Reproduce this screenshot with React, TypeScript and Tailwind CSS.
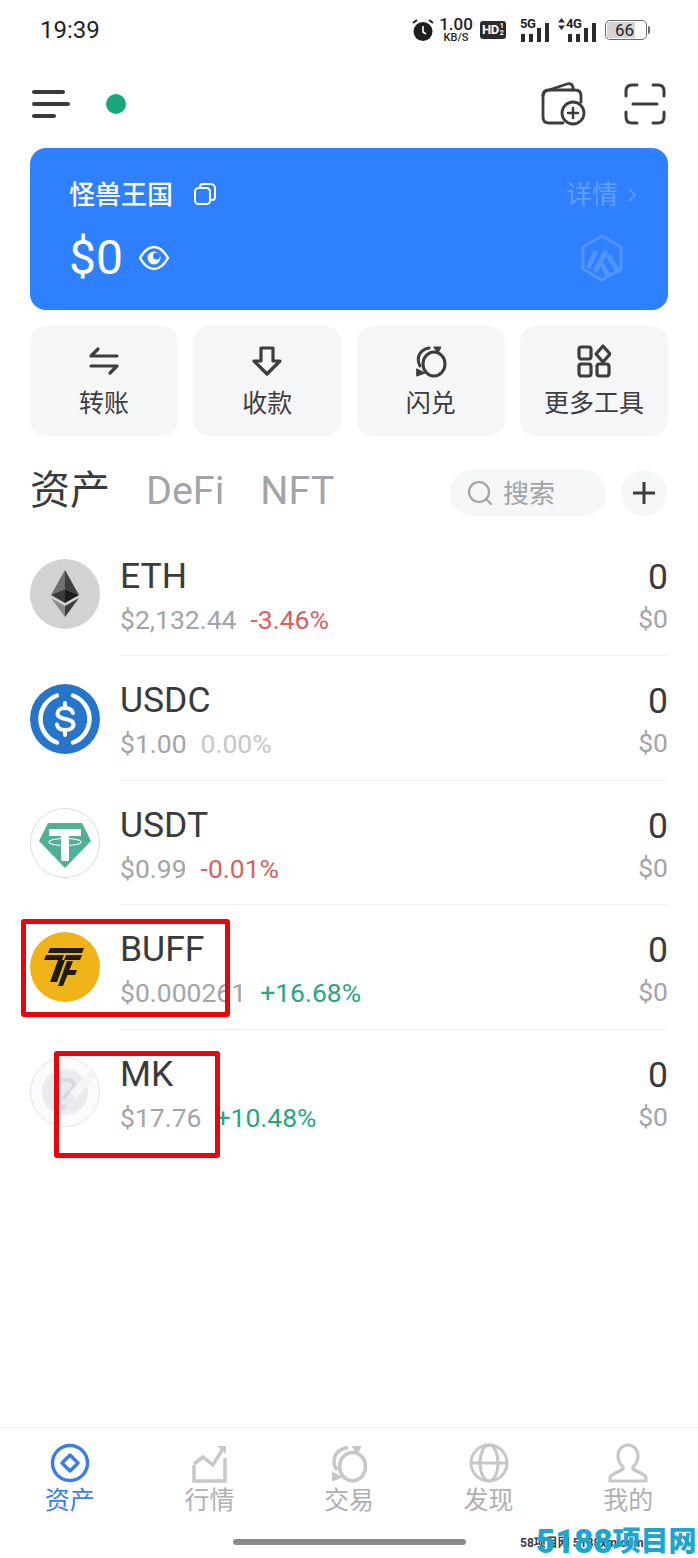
import type { ReactNode } from 'react';

/* ── Token data ── */
type Token = {
  symbol: string;
  price: string;
  change: string;
  tone: 'red' | 'green' | 'flat';
  logo: ReactNode;
};

function EthLogo() {
  return (
    <svg viewBox="0 0 70 70" className="w-[70px] h-[70px]">
      <circle cx="35" cy="35" r="35" fill="#d2d2d2" />
      <polygon points="35,11 21,36 35,30" fill="#6f6f6f" />
      <polygon points="35,11 49,36 35,30" fill="#3f3f3f" />
      <polygon points="21,36 35,30 35,44" fill="#3a3a3a" />
      <polygon points="49,36 35,30 35,44" fill="#1c1c1c" />
      <polygon points="21,39 35,47 35,58" fill="#8a8a8a" />
      <polygon points="49,39 35,47 35,58" fill="#3f3f3f" />
    </svg>
  );
}

function UsdcLogo() {
  return (
    <svg viewBox="0 0 70 70" className="w-[70px] h-[70px]">
      <circle cx="35" cy="35" r="35" fill="#2775ca" />
      <path d="M27 11.500a25 25 0 0 0 0 47" fill="none" stroke="#fff" strokeWidth="4.500" strokeLinecap="round" />
      <path d="M43 11.500a25 25 0 0 1 0 47" fill="none" stroke="#fff" strokeWidth="4.500" strokeLinecap="round" />
      <path
        d="M43 29c-1-3-4-5-8-5-4.500 0-7.500 2.500-7.500 5.500 0 7.500 16 3.500 16 11 0 3.500-3.500 5.500-8.500 5.500-4.500 0-7.500-2-8-5.500"
        fill="none"
        stroke="#fff"
        strokeWidth="4"
        strokeLinecap="round"
      />
      <path d="M35 19v5M35 46v5" stroke="#fff" strokeWidth="4" strokeLinecap="round" />
    </svg>
  );
}

function UsdtLogo() {
  return (
    <svg viewBox="0 0 70 70" className="w-[70px] h-[70px]">
      <circle cx="35" cy="35" r="34.500" fill="#fff" stroke="#dcdcdc" />
      <polygon points="18,15 52,15 61,33 35,60 9,33" fill="#50af95" />
      <path d="M19 21h32v7H39v25h-8V28H19z" fill="#fff" />
      <ellipse cx="35" cy="34" rx="16" ry="3.500" fill="none" stroke="#fff" strokeWidth="1.200" />
    </svg>
  );
}

function BuffLogo() {
  return (
    <svg viewBox="0 0 70 70" className="w-[70px] h-[70px]">
      <circle cx="35" cy="35" r="35" fill="#efb318" />
      <polygon points="20,16 54,16 52,21 18,21" fill="#1f1a12" />
      <polygon points="16,23 34,23 32,28 14,28" fill="#1f1a12" />
      <polygon points="36,23 52,23 50,28 34,28" fill="#1f1a12" />
      <polygon points="28,28 35,28 27,50 20,50" fill="#1f1a12" />
      <polygon points="37,29 43,29 33,54 28,54" fill="#1f1a12" />
      <polygon points="37,38 47,38 45,43 35,43" fill="#1f1a12" />
    </svg>
  );
}

function UnknownLogo() {
  return (
    <svg viewBox="0 0 70 70" className="w-[70px] h-[70px]">
      <circle cx="35" cy="35" r="34.500" fill="#fbfbfc" stroke="#e2e3e6" />
      <circle cx="35" cy="35" r="23" fill="#e9ebf0" />
      <path d="M29 27c2-6 14-6 15 1 1 6-9 7-11 15" fill="none" stroke="#d8dae0" strokeWidth="4" />
      <circle cx="33" cy="50" r="3" fill="#d8dae0" />
      <polygon points="40,35 60,13 64,20 46,42" fill="#f4f5f7" />
    </svg>
  );
}

const TOKENS: Token[] = [
  { symbol: 'ETH', price: '$2,132.44', change: '-3.46%', tone: 'red', logo: <EthLogo /> },
  { symbol: 'USDC', price: '$1.00', change: '0.00%', tone: 'flat', logo: <UsdcLogo /> },
  { symbol: 'USDT', price: '$0.99', change: '-0.01%', tone: 'red', logo: <UsdtLogo /> },
  { symbol: 'BUFF', price: '$0.000261', change: '+16.68%', tone: 'green', logo: <BuffLogo /> },
  { symbol: 'MK', price: '$17.76', change: '+10.48%', tone: 'green', logo: <UnknownLogo /> },
];

/* ── Status bar ── */
function Signal({ bars }: { bars: number[] }) {
  return (
    <div className="flex items-end gap-[4px]">
      {bars.map((h, i) => (
        <div key={i} className="w-[4px] bg-[#2b2b2d]" style={{ height: h }} />
      ))}
    </div>
  );
}

function StatusBar() {
  return (
    <div className="h-[60px] pl-[40px] pr-[48px] flex items-center justify-between text-[#1f1f21]">
      <span className="text-[24px] leading-none">19:39</span>
      <div className="flex items-center">
        <svg viewBox="0 0 22 24" className="w-[22px] h-[24px]">
          <circle cx="11" cy="13.500" r="9.500" fill="#1f1f21" />
          <path d="M11 8v6l3 2" fill="none" stroke="#fff" strokeWidth="1.600" />
          <path d="M1 5l4-3M21 5l-4-3" stroke="#1f1f21" strokeWidth="2" />
        </svg>
        <div className="ml-[6px] w-[32px] flex flex-col items-center font-medium">
          <span className="text-[17px] leading-[15px]">1.00</span>
          <span className="text-[11px] leading-[11px]">KB/S</span>
        </div>
        <div className="ml-[8px] w-[26px] h-[18px] rounded-[3px] bg-[#2b2b2d] text-white font-bold pl-[2px] flex items-center">
          <span className="text-[13px] leading-[18px] tracking-[-0.5px]">HD</span>
          <span className="ml-[1px] flex flex-col text-[7px] leading-[7px]">
            <span>1</span>
            <span>2</span>
          </span>
        </div>
        <div className="ml-[13px] relative w-[30px] h-[24px] flex items-end justify-end">
          <span className="absolute left-[1px] -top-[1px] text-[13px] leading-[14px] font-bold tracking-[-0.5px]">5G</span>
          <Signal bars={[8, 8, 14, 19]} />
        </div>
        <div className="ml-[7px] relative w-[40px] h-[24px] flex items-end justify-end">
          <svg viewBox="0 0 7 12" className="absolute left-[2px] top-[0px] w-[7px] h-[12px]" fill="#2b2b2d">
            <path d="M3.500 0L7 4.500H0zM3.500 12L0 7.500h7z" />
          </svg>
          <span className="absolute left-[10px] -top-[1px] text-[13px] leading-[14px] font-bold tracking-[-0.5px]">4G</span>
          <Signal bars={[8, 8, 14, 19]} />
        </div>
        <div className="ml-[9px] w-[42px] h-[20px] rounded-[5px] border border-[#6a6a6c] p-[1px] flex">
          <div className="w-[28px] bg-[#d4d4d6] rounded-l-[3px] text-[17px] leading-[16px] pl-[8px] overflow-visible whitespace-nowrap">
            66
          </div>
        </div>
        <div className="ml-[1px] w-[2px] h-[8px] bg-[#6a6a6c] rounded-r-sm" />
      </div>
    </div>
  );
}

/* ── Top bar ── */
function TopBar() {
  return (
    <div className="h-[88px] pl-[32px] pr-[32px] flex items-center justify-between">
      <div className="flex items-center">
        <div className="flex flex-col gap-[8px]">
          <div className="w-[33px] h-[4px] rounded-full bg-[#3a3a3c]" />
          <div className="w-[38px] h-[4px] rounded-full bg-[#3a3a3c]" />
          <div className="w-[24px] h-[4px] rounded-full bg-[#3a3a3c]" />
        </div>
        <div className="ml-[36px] w-[20px] h-[20px] rounded-full bg-[#17a77a]" />
      </div>
      <div className="flex items-center gap-[37px]">
        <svg viewBox="0 0 46 44" className="w-[46px] h-[44px]" fill="none" stroke="#3d3d3f" strokeWidth="2.800" strokeLinecap="round">
          <path d="M2 14c0-3 1-4 3-5L26 2c3-1 5 0 6 3v3" />
          <path d="M22 41H8c-4 0-6-2-6-6V14c0-4 2-6 6-6h26c4 0 6 2 6 6v6" />
          <circle cx="32" cy="31" r="11" />
          <path d="M32 26v10M27 31h10" strokeWidth="2.500" />
        </svg>
        <svg viewBox="0 0 42 42" className="w-[42px] h-[42px]" fill="none" stroke="#3d3d3f" strokeWidth="3" strokeLinecap="round">
          <path d="M2 13V8c0-4 2-6 6-6h5M29 2h5c4 0 6 2 6 6v5M2 29v5c0 4 2 6 6 6h5M29 40h5c4 0 6-2 6-6v-5" />
          <path d="M9 21h24" />
        </svg>
      </div>
    </div>
  );
}

/* ── Balance card ── */
function BalanceCard() {
  return (
    <div className="mx-[30px] h-[162px] rounded-[16px] bg-[#2e80ff] pt-[31px] pl-[39px] pr-[31px] text-white">
      <div className="h-[32px] flex items-center justify-between">
        <div className="flex items-center">
          <span className="text-[26px] leading-[32px] font-medium">怪兽王国</span>
          <svg viewBox="0 0 24 24" className="ml-[20px] -mt-[2px] w-[24px] h-[24px]" fill="none" stroke="#fff" strokeWidth="2">
            <rect x="2" y="6" width="15" height="16" rx="3.500" />
            <path d="M7 6V5c0-2 1-3 3-3h8c2 0 4 2 4 4v9c0 2-1 3-3 3h-2" />
          </svg>
        </div>
        <div className="flex items-center text-white/25">
          <span className="text-[26px] leading-[32px]">详情</span>
          <svg viewBox="0 0 10 16" className="ml-[9px] w-[10px] h-[16px]" fill="none" stroke="currentColor" strokeWidth="1.600">
            <path d="M2 2l6 6-6 6" />
          </svg>
        </div>
      </div>
      <div className="mt-[21px] h-[52px] flex items-center justify-between">
        <div className="flex items-center">
          <span className="text-[48px] leading-[52px]">$0</span>
          <svg viewBox="0 0 32 26" className="ml-[15px] w-[32px] h-[26px]" fill="none" stroke="#fff" strokeWidth="2.400">
            <path d="M2 13C6 6 11 2 16 2s10 4 14 11c-4 7-9 11-14 11S6 20 2 13z" />
            <circle cx="16" cy="13" r="6.500" fill="#fff" stroke="none" />
            <circle cx="18.500" cy="11" r="3.500" fill="#2e80ff" stroke="none" />
          </svg>
        </div>
        <svg viewBox="0 0 44 48" className="mr-[13px] w-[44px] h-[48px] opacity-20" fill="none" stroke="#d5e5ff" strokeWidth="3">
          <path d="M22 2l19 11v22L22 46 3 35V13z" />
          <path d="M8 34l8-17M15 38l11-21M28 21l11 18M22 30l7 13" strokeWidth="5" />
        </svg>
      </div>
    </div>
  );
}

/* ── Shared swap icon ── */
function SwapIcon({ className, color }: { className: string; color: string }) {
  return (
    <svg viewBox="0 0 34 34" className={className} fill="none" stroke={color} strokeWidth="3" strokeLinecap="round">
      <ellipse cx="20" cy="20" rx="11" ry="12" />
      <path d="M6 22C2 14 5 6 15 4" />
      <path d="M20 3l7 0-3 6z" fill={color} strokeWidth="1" strokeLinejoin="round" />
      <path d="M3 25l8 4-8 3z" fill={color} strokeWidth="1" strokeLinejoin="round" />
    </svg>
  );
}

/* ── Quick actions ── */
const ACTIONS: { label: string; icon: ReactNode }[] = [
  {
    label: '转账',
    icon: (
      <svg viewBox="0 0 34 34" className="w-[34px] h-[34px]" fill="none" stroke="#3d3d3f" strokeWidth="3.200" strokeLinecap="round" strokeLinejoin="round">
        <path d="M11 5l-7 7h26M23 29l7-7H4" />
      </svg>
    ),
  },
  {
    label: '收款',
    icon: (
      <svg viewBox="0 0 34 34" className="w-[34px] h-[34px]" fill="none" stroke="#3d3d3f" strokeWidth="3.200" strokeLinejoin="round">
        <path d="M11 4h12v13h7L17 30 4 17h7z" />
      </svg>
    ),
  },
  {
    label: '闪兑',
    icon: <SwapIcon className="w-[34px] h-[34px]" color="#3d3d3f" />,
  },
  {
    label: '更多工具',
    icon: (
      <svg viewBox="0 0 34 34" className="w-[34px] h-[34px]" fill="none" stroke="#3d3d3f" strokeWidth="3.200" strokeLinejoin="round">
        <rect x="2" y="3" width="12" height="12" rx="2.500" />
        <path d="M26 2l7 8-7 8-7-8z" />
        <rect x="2" y="20" width="12" height="12" rx="2.500" />
        <rect x="20" y="20" width="12" height="12" rx="2.500" />
      </svg>
    ),
  },
];

function QuickActions() {
  return (
    <div className="mx-[30px] mt-[16px] grid grid-cols-4 gap-[15.300px]">
      {ACTIONS.map((a) => (
        <div key={a.label} className="h-[110px] rounded-[16px] bg-[#f5f6f8] pt-[18px] flex flex-col items-center">
          {a.icon}
          <span className="mt-[11px] text-[25px] leading-[30px] text-[#3d3d3f]">{a.label}</span>
        </div>
      ))}
    </div>
  );
}

/* ── Asset tabs ── */
function AssetTabs() {
  return (
    <div className="mt-[34px] pl-[30px] pr-[31px] h-[46px] flex items-center justify-between">
      <div className="flex items-center pb-[4px]">
        <span className="text-[40px] leading-[46px] text-[#3a3a3c]">资产</span>
        <span className="ml-[36px] text-[39.500px] leading-[46px] text-[#a3a4a7]">DeFi</span>
        <span className="ml-[36px] text-[39.500px] leading-[46px] text-[#a3a4a7]">NFT</span>
      </div>
      <div className="flex items-center gap-[15px]">
        <div className="w-[156px] h-[46px] rounded-full bg-[#f5f6f8] pl-[17px] flex items-center">
          <svg viewBox="0 0 26 26" className="w-[26px] h-[26px]" fill="none" stroke="#a3a4a7" strokeWidth="2.200" strokeLinecap="round">
            <circle cx="12" cy="12" r="10" />
            <path d="M20 20l4 4" />
          </svg>
          <span className="ml-[10px] pt-[2px] text-[26px] leading-[44px] text-[#a3a4a7]">搜索</span>
        </div>
        <div className="w-[46px] h-[46px] rounded-full bg-[#f5f6f8] flex items-center justify-center">
          <svg viewBox="0 0 24 24" className="w-[24px] h-[24px]" stroke="#3d3d3f" strokeWidth="3">
            <path d="M12 1v22M1 12h22" />
          </svg>
        </div>
      </div>
    </div>
  );
}

/* ── Token list ── */
const TONE_CLASS = {
  red: 'text-[#d9605f]',
  green: 'text-[#2aa580]',
  flat: 'text-[#c6c7ca]',
};

function TokenRow({ token, last }: { token: Token; last: boolean }) {
  return (
    <div className="h-[124.400px] pl-[30px] pr-[30px] flex">
      <div className="self-center w-[70px] h-[70px]">{token.logo}</div>
      <div className={`ml-[20px] flex-1 pt-[24px] flex justify-between ${last ? '' : 'border-b border-[#f2f2f4]'}`}>
        <div>
          <div className="text-[35.500px] leading-[40px] text-[#3a3a3c]">{token.symbol}</div>
          <div className="mt-[6px] text-[26.500px] leading-[36px] text-[#a3a4a7]">
            {token.price}
            <span className={`ml-[14px] ${TONE_CLASS[token.tone]}`}>{token.change}</span>
          </div>
        </div>
        <div className="text-right">
          <div className="text-[35.500px] leading-[42px] text-[#3a3a3c]">0</div>
          <div className="mt-[3px] text-[26.500px] leading-[36px] text-[#a3a4a7]">$0</div>
        </div>
      </div>
    </div>
  );
}

/* ── Bottom nav ── */
const GRAY = '#c5c7c9';

const NAV_ITEMS: { label: string; active?: boolean; icon: ReactNode }[] = [
  {
    label: '资产',
    active: true,
    icon: (
      <svg viewBox="0 0 40 40" className="w-[40px] h-[40px]" fill="none" stroke="#3d7fe0" strokeWidth="3.500">
        <circle cx="20" cy="20" r="17.500" />
        <path d="M20 12l8 8-8 8-8-8z" strokeLinejoin="round" />
      </svg>
    ),
  },
  {
    label: '行情',
    icon: (
      <svg viewBox="0 0 40 40" className="w-[40px] h-[40px]" fill="none" stroke={GRAY} strokeWidth="3.500">
        <path d="M5 22v16h31V15M5 21l9-7 10 8L35 4" />
        <path d="M28 3h9v8z" fill={GRAY} stroke="none" />
      </svg>
    ),
  },
  {
    label: '交易',
    icon: <SwapIcon className="w-[40px] h-[40px]" color={GRAY} />,
  },
  {
    label: '发现',
    icon: (
      <svg viewBox="0 0 40 40" className="w-[40px] h-[40px]" fill="none" stroke={GRAY} strokeWidth="3">
        <circle cx="20" cy="20" r="18" />
        <ellipse cx="20" cy="20" rx="9" ry="18" />
        <path d="M3 20h34" />
      </svg>
    ),
  },
  {
    label: '我的',
    icon: (
      <svg viewBox="0 0 40 40" className="w-[40px] h-[40px]" fill="none" stroke={GRAY} strokeWidth="3.200" strokeLinejoin="round">
        <path d="M20 2c6 0 10 5 10 11 0 5-2 8-5 11v2l11 6c2 1 2 2 2 6H2c0-4 0-5 2-6l11-6v-2c-3-3-5-6-5-11C10 7 14 2 20 2z" />
      </svg>
    ),
  },
];

function BottomNav() {
  return (
    <div className="h-[131px] border-t border-[#f2f2f4] pt-[15px]">
      <div className="grid grid-cols-5">
        {NAV_ITEMS.map((item) => (
          <div key={item.label} className="flex flex-col items-center">
            {item.icon}
            <span className={`mt-[3px] text-[25px] leading-[30px] ${item.active ? 'text-[#3d7fe0]' : 'text-[#aeb0b3]'}`}>
              {item.label}
            </span>
          </div>
        ))}
      </div>
      <div className="mx-auto mt-[23px] w-[233px] h-[6px] rounded-full bg-[#8a8a8c]" />
    </div>
  );
}

export default function App() {
  return (
    <div className="relative w-[698px] h-[1558px] overflow-hidden bg-white flex flex-col [font-family:Roboto,'Noto_Sans_CJK_SC',sans-serif]">
      <StatusBar />
      <TopBar />
      <BalanceCard />
      <QuickActions />
      <AssetTabs />
      <div className="mt-[16px] flex-1">
        {TOKENS.map((t, i) => (
          <TokenRow key={t.symbol} token={t} last={i === TOKENS.length - 1} />
        ))}
      </div>
      <BottomNav />

      {/* Red markup boxes drawn over the screenshot */}
      <div className="absolute left-[21px] top-[919px] w-[209px] h-[98px] rounded-[3px] border-[5px] border-[#e8060c]" />
      <div className="absolute left-[54px] top-[1051px] w-[166px] h-[107px] rounded-[3px] border-[5px] border-[#e8060c]" />

      {/* Watermark */}
      <div className="absolute left-[520px] top-[1529px] text-[12px] leading-[28px] font-bold text-[#3a3a3c] whitespace-nowrap">
        58项目网 5188xm.com
      </div>
      <div className="absolute left-[536px] top-[1528px] flex items-center font-black text-[#1ba6d0] whitespace-nowrap">
        <span className="text-[33px] leading-[28px]">5188</span>
        <span className="text-[28px] leading-[28px]">项目网</span>
      </div>
    </div>
  );
}
